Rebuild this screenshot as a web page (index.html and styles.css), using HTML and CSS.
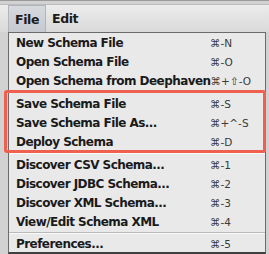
FILE: index.html
```html
<!DOCTYPE html>
<html lang="en">
<head>
    <meta charset="UTF-8">
    <title>File menu</title>
    <link rel="stylesheet" href="styles.css">
</head>
<body>
    <div class="window">
        <div class="menubar">
            <div class="menu-title active">File</div>
            <div class="menu-title">Edit</div>
        </div>

        <div class="dropdown">
            <div class="item"><span class="label">New Schema File</span><span class="key">⌘-N</span></div>
            <div class="item"><span class="label">Open Schema File</span><span class="key">⌘-O</span></div>
            <div class="item"><span class="label">Open Schema from Deephaven</span><span class="key">⌘+⇧-O</span></div>
            <div class="separator"></div>
            <div class="item"><span class="label">Save Schema File</span><span class="key">⌘-S</span></div>
            <div class="item"><span class="label">Save Schema File As...</span><span class="key">⌘+^-S</span></div>
            <div class="item"><span class="label">Deploy Schema</span><span class="key">⌘-D</span></div>
            <div class="separator"></div>
            <div class="item"><span class="label">Discover CSV Schema...</span><span class="key">⌘-1</span></div>
            <div class="item"><span class="label">Discover JDBC Schema...</span><span class="key">⌘-2</span></div>
            <div class="item"><span class="label">Discover XML Schema...</span><span class="key">⌘-3</span></div>
            <div class="item"><span class="label">View/Edit Schema XML</span><span class="key">⌘-4</span></div>
            <div class="separator"></div>
            <div class="item last"><span class="label">Preferences...</span><span class="key">⌘-5</span></div>

            <!-- annotation box over the save group -->
            <div class="highlight"></div>
        </div>
    </div>
</body>
</html>
```

FILE: styles.css
```css
html, body {
    margin: 0;
    padding: 0;
}
body {
    width: 269px;
    height: 254px;
    overflow: hidden;
    background-color: #d2d2d2;
    font-family: "DejaVu Sans", sans-serif;
}
.window {
    position: relative;
    height: 254px;
    border-top: 1px solid #9a9a9a;
    box-sizing: border-box;
}
.menubar {
    margin-top: 3px;
    height: 27px;
    display: flex;
    align-items: stretch;
    padding-left: 8px;
    background: linear-gradient(#ececec, #d9d9d9);
    border-top: 1px solid #bdbdbd;
}
.menu-title {
    display: flex;
    align-items: center;
    padding: 0 6px;
    font-size: 12.5px;
    font-weight: bold;
    letter-spacing: -0.4px;
    color: #1c1c1c;
}
.menu-title.active {
    background: linear-gradient(#d6d9de, #c6c9cf);
    border-left: 1px solid #b4b4b8;
    border-right: 1px solid #b4b4b8;
    border-top: 1px solid #b4b4b8;
}
.dropdown {
    position: relative;
    margin-left: 8px;
    width: 256px;
    background-color: #e9e9e9;
    border: 1px solid #6b6b6b;
    border-bottom: 2px solid #3f3f3f;
}
.item {
    display: flex;
    align-items: center;
    height: 19px;
    padding-left: 7px;
    color: #1a1a1a;
}
.item.last {
    height: 17px;
}
.label {
    flex: 0 0 194px;
    font-size: 12px;
    font-weight: bold;
    letter-spacing: -0.55px;
    white-space: nowrap;
}
.key {
    font-size: 10.5px;
    color: #3a3a3a;
    white-space: nowrap;
}
.separator {
    height: 1px;
    margin: 1px 0;
    background-color: #b9b9b9;
    border-bottom: 1px solid #fafafa;
}
.highlight {
    position: absolute;
    left: -5px;
    top: 57px;
    width: 256px;
    height: 57px;
    border: 3px solid #f0604e;
    border-radius: 3px;
}
```
